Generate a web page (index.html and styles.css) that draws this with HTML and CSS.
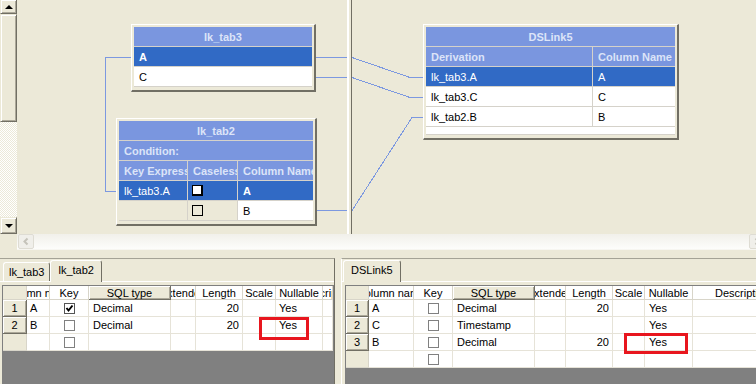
FILE: index.html
```html
<!DOCTYPE html>
<html>
<head>
  <meta charset="UTF-8">
  <meta name="viewport" content="width=device-width, initial-scale=1">
  <title>Transformer stage</title>
  <link rel="stylesheet" href="styles.css">
</head>
<body>

<div class="top">
  <div class="vscroll">
    <div class="sbtn up"><span class="tri-up"></span></div>
    <div class="thumb"></div>
    <div class="track"></div>
    <div class="sbtn down"><span class="tri-down"></span></div>
  </div>

  <div class="canvas">
    <!-- input links -->
    <div class="pane left-pane">
      <svg class="links" width="330" height="234">
        <polyline points="114,57.5 88.5,57.5 88.5,191.5 99,191.5"/>
        <polyline points="299,57.5 330,57.5"/>
        <polyline points="299,77.5 330,77.5"/>
        <polyline points="300,210.5 330,210.5"/>
      </svg>

      <div class="node n-tab3">
        <div class="ntable one">
          <div class="ncell ntitle">lk_tab3</div>
          <div class="ncell sel b">A</div>
          <div class="ncell">C</div>
        </div>
      </div>

      <div class="node n-tab2">
        <div class="ntable three">
          <div class="ncell ntitle">lk_tab2</div>
          <div class="ncell nhead wide">Condition:</div>
          <div class="ncell nhead">Key Expression</div>
          <div class="ncell nhead">Caseless</div>
          <div class="ncell nhead">Column Name</div>
          <div class="ncell sel">lk_tab3.A</div>
          <div class="ncell sel box"><span class="nbox on"></span></div>
          <div class="ncell sel b">A</div>
          <div class="ncell flat"></div>
          <div class="ncell flat box"><span class="nbox"></span></div>
          <div class="ncell">B</div>
        </div>
      </div>
    </div>

    <div class="splitter"></div>

    <!-- output link -->
    <div class="pane right-pane">
      <svg class="links" width="404" height="234">
        <polyline points="0,57.5 58,77.5 71,77.5"/>
        <polyline points="0,77.5 58,97.5 71,97.5"/>
        <polyline points="0,210.5 60,117.5 71,117.5"/>
      </svg>

      <div class="node n-link5">
        <div class="ntable two">
          <div class="ncell ntitle">DSLink5</div>
          <div class="ncell nhead">Derivation</div>
          <div class="ncell nhead">Column Name</div>
          <div class="ncell sel">lk_tab3.A</div>
          <div class="ncell sel">A</div>
          <div class="ncell">lk_tab3.C</div>
          <div class="ncell">C</div>
          <div class="ncell">lk_tab2.B</div>
          <div class="ncell">B</div>
          <div class="ncell wide"></div>
        </div>
      </div>
    </div>
  </div>
</div>

<div class="hbar">
  <div class="corner"></div>
  <div class="hscroll">
    <div class="hbtn">
      <svg width="14" height="13"><polyline points="8.5,3.5 5.5,6.5 8.5,9.5"/></svg>
    </div>
    <div class="hbtn hright">
      <svg width="14" height="13"><polyline points="5.5,3.5 8.5,6.5 5.5,9.5"/></svg>
    </div>
  </div>
</div>

<div class="dock">
  <div class="panel pleft">
    <div class="tabs">
      <div class="tab">lk_tab3</div>
      <div class="tab on">lk_tab2</div>
    </div>
    <div class="gridwrap">
      <div class="dgrid gl">
        <div class="d rh"></div>
        <div class="d h">Column name</div>
        <div class="d h">Key</div>
        <div class="d h btn">SQL type</div>
        <div class="d h">Extended</div>
        <div class="d h">Length</div>
        <div class="d h">Scale</div>
        <div class="d h">Nullable</div>
        <div class="d h">Description</div>

        <div class="d rh btn">1</div>
        <div class="d">A</div>
        <div class="d ck"><span class="cb on"><svg width="9" height="9"><polyline points="1.5,4 3.5,6.5 7.5,1.5"/></svg></span></div>
        <div class="d sq">Decimal</div>
        <div class="d"></div>
        <div class="d num">20</div>
        <div class="d"></div>
        <div class="d">Yes</div>
        <div class="d"></div>

        <div class="d rh btn">2</div>
        <div class="d">B</div>
        <div class="d ck"><span class="cb"></span></div>
        <div class="d sq">Decimal</div>
        <div class="d"></div>
        <div class="d num">20</div>
        <div class="d"></div>
        <div class="d">Yes</div>
        <div class="d"></div>

        <div class="d rh"></div>
        <div class="d"></div>
        <div class="d ck"><span class="cb"></span></div>
        <div class="d"></div>
        <div class="d"></div>
        <div class="d"></div>
        <div class="d"></div>
        <div class="d"></div>
        <div class="d"></div>
      </div>
    </div>
    <div class="mark mark-l"></div>
  </div>

  <div class="panel pright">
    <div class="tabs">
      <div class="tab on">DSLink5</div>
    </div>
    <div class="gridwrap">
      <div class="dgrid gr">
        <div class="d rh"></div>
        <div class="d h">Column name</div>
        <div class="d h">Key</div>
        <div class="d h btn">SQL type</div>
        <div class="d h">Extended</div>
        <div class="d h">Length</div>
        <div class="d h">Scale</div>
        <div class="d h">Nullable</div>
        <div class="d h">Description</div>

        <div class="d rh btn">1</div>
        <div class="d">A</div>
        <div class="d ck"><span class="cb"></span></div>
        <div class="d sq">Decimal</div>
        <div class="d"></div>
        <div class="d num">20</div>
        <div class="d"></div>
        <div class="d sq">Yes</div>
        <div class="d"></div>

        <div class="d rh btn">2</div>
        <div class="d">C</div>
        <div class="d ck"><span class="cb"></span></div>
        <div class="d sq">Timestamp</div>
        <div class="d"></div>
        <div class="d num"></div>
        <div class="d"></div>
        <div class="d sq">Yes</div>
        <div class="d"></div>

        <div class="d rh btn">3</div>
        <div class="d">B</div>
        <div class="d ck"><span class="cb"></span></div>
        <div class="d sq">Decimal</div>
        <div class="d"></div>
        <div class="d num">20</div>
        <div class="d"></div>
        <div class="d sq">Yes</div>
        <div class="d"></div>

        <div class="d rh"></div>
        <div class="d"></div>
        <div class="d ck"><span class="cb"></span></div>
        <div class="d"></div>
        <div class="d"></div>
        <div class="d"></div>
        <div class="d"></div>
        <div class="d"></div>
        <div class="d"></div>
      </div>
    </div>
    <div class="mark mark-r"></div>
  </div>
</div>

</body>
</html>
```

FILE: styles.css
```css
body{
  margin: 0;
  width: 756px;
  height: 384px;
  overflow: hidden;
  background: #ECE9D8;
  font-family: "Liberation Sans", Arial, sans-serif;
  font-size: 11px;
  color: #000;
}

/* ---- diagram area ---- */

.top{
  display: flex;
  height: 234px;
}

.vscroll{
  width: 17px;
  display: flex;
  flex-direction: column;
  background: repeating-conic-gradient(#fff 0 25%, #ECE9D8 0 50%) 0 0 / 2px 2px;
}

.sbtn, .thumb{
  box-sizing: border-box;
  background: #ECE9D8;
  border: 1px solid;
  border-color: #ECE9D8 #716F64 #716F64 #ECE9D8;
  box-shadow: inset 1px 1px #fff, inset -1px -1px #ACA899;
  display: flex;
  align-items: center;
  justify-content: center;
}

.up{
  height: 14px;
  border-top: none;
}

.thumb{
  height: 108px;
}

.track{
  flex: 1;
}

.down{
  height: 17px;
}

.tri-up, .tri-down{
  width: 0;
  height: 0;
  border-left: 4px solid transparent;
  border-right: 4px solid transparent;
}
.tri-up{ border-bottom: 4px solid #000; }
.tri-down{ border-top: 4px solid #000; }

.canvas{
  flex: 1;
  display: flex;
}

.pane{
  position: relative;
  overflow: hidden;
}

.left-pane{
  width: 330px;
}

.right-pane{
  flex: 1;
}

.splitter{
  width: 5px;
  box-sizing: border-box;
  border-left: 2px solid #fff;
  border-right: 1px solid #716F64;
}

.links{
  position: absolute;
  left: 0;
  top: 0;
}

.links polyline{
  fill: none;
  stroke: #7C98E0;
  stroke-width: 1;
  shape-rendering: crispEdges;
}

/* link boxes */

.node{
  position: absolute;
  box-sizing: border-box;
  background: #ECE9D8;
  border-style: solid;
  border-width: 1px 2px 2px 1px;
  border-color: #fff #716F64 #716F64 #fff;
  padding: 2px 2px 3px 2px;
}

.n-tab3{ left: 114px; top: 24px; width: 185px; }
.n-tab2{ left: 99px; top: 118px; width: 201px; }
.n-link5{ left: 71px; top: 24px; width: 256px; }

.ntable{
  display: grid;
  gap: 1px;
  grid-auto-rows: 19px;
  background: #D5D2CA;
  padding-bottom: 1px;
}

.one{ grid-template-columns: 1fr; }
.two{ grid-template-columns: 166px 1fr; grid-template-rows: repeat(5, 19px) 7px; }
.three{ grid-template-columns: 68px 49px 1fr; }

.ncell{
  display: flex;
  align-items: center;
  padding: 0 5px;
  white-space: nowrap;
  overflow: hidden;
  background: #fff;
}

.ntitle{
  grid-column: 1 / -1;
  justify-content: center;
  background: #7A96DF;
  color: #DCE4F8;
  font-weight: bold;
}

.nhead{
  background: #7A96DF;
  color: #DCE4F8;
  font-weight: bold;
}

.wide{
  grid-column: 1 / -1;
}

.sel{
  background: #316AC5;
  color: #fff;
}

.flat{
  background: #ECE9D8;
}

.b{
  font-weight: bold;
}

.box{
  padding: 0 4px;
}

.nbox{
  width: 9px;
  height: 9px;
  border: 1px solid #000;
}
.nbox.on{
  background: #fff;
  border-width: 1px 2px 2px 1px;
  width: 8px;
  height: 8px;
}

/* ---- horizontal scrollbar ---- */

.hbar{
  display: flex;
  height: 16px;
}

.corner{
  width: 17px;
}

.hscroll{
  flex: 1;
  display: flex;
  justify-content: space-between;
  align-items: flex-end;
  overflow: hidden;
  background: linear-gradient(#F1F0EA, #FDFDFB);
  border-bottom: 1px solid #F7F6F1;
}

.hbtn{
  width: 16px;
  height: 15px;
  margin-left: 1px;
  box-sizing: border-box;
  border: 1px solid #DEDCD3;
  border-radius: 2px;
  background: #F0EFEA;
  flex-shrink: 0;
}

.hright{
  margin-right: -9px;
}

.hbtn polyline{
  fill: none;
  stroke: #C5C3BA;
  stroke-width: 2;
}

/* ---- column grids ---- */

.dock{
  display: flex;
  gap: 6px;
  height: 134px;
  padding-top: 8px;
  box-sizing: border-box;
}

.panel{
  position: relative;
  display: flex;
  flex-direction: column;
  border-top: 1px solid #A5A396;
  overflow: hidden;
}

.pleft{
  width: 335px;
  box-sizing: border-box;
  border-right: 1px solid #716F64;
}

.pright{
  flex: 1;
  border-left: 1px solid #fff;
}

.tabs{
  height: 22px;
  display: flex;
  align-items: flex-end;
  border-bottom: 1px solid #fff;
  padding-left: 3px;
}

.pright .tabs{
  padding-left: 1px;
}

.tab{
  height: 19px;
  line-height: 18px;
  padding: 0 5px;
  box-sizing: border-box;
  border: 1px solid;
  border-color: #fff #716F64 transparent #fff;
  border-bottom: none;
  border-radius: 3px 3px 0 0;
}

.tab.on{
  position: relative;
  height: 22px;
  line-height: 19px;
  padding: 0 7px;
  margin-bottom: -1px;
  background: #ECE9D8;
}

.gridwrap{
  flex: 1;
  margin: 3px 0 0 2px;
  border-top: 1px solid #7F7F7F;
  border-left: 1px solid #7F7F7F;
  background: #808080;
  overflow: hidden;
}

.pright .gridwrap{
  margin-left: 3px;
}

.dgrid{
  display: grid;
  grid-template-rows: 14px;
  grid-auto-rows: 17px;
  width: max-content;
}

.gl{ grid-template-columns: 24px 23px 39px 82px 25px 47px 33px 47px 10px; }
.gr{ grid-template-columns: 23px 45px 39px 82px 31px 47px 32px 48px 100px; }

.d{
  display: flex;
  align-items: center;
  box-sizing: border-box;
  padding: 0 3px;
  white-space: nowrap;
  overflow: hidden;
  background: #fff;
  border-right: 1px solid #E6E3D8;
  border-bottom: 1px solid #E6E3D8;
}

.h{
  justify-content: center;
  padding: 0;
  border-color: #D8D5C9;
}

.rh{
  justify-content: center;
  padding: 0;
  background: #ECE9D8;
  border-color: #D8D5C9;
}

.btn{
  background: #ECE9D8;
  border-color: #716F64;
  box-shadow: inset 1px 1px #fff, inset -1px -1px #ACA899;
}

.sq{
  padding-left: 4px;
}

.num{
  justify-content: flex-end;
}

.ck{
  justify-content: center;
}

.cb{
  width: 11px;
  height: 11px;
  box-sizing: border-box;
  border: 1px solid #808080;
  background: #fff;
  display: flex;
  align-items: center;
  justify-content: center;
}

.cb.on{
  border-color: #555;
}

.cb polyline{
  fill: none;
  stroke: #000;
  stroke-width: 2;
}

.mark{
  position: absolute;
  box-sizing: border-box;
  border: 3px solid #E8161E;
}

.mark-l{ left: 259px; top: 58px; width: 50px; height: 23px; }
.mark-r{ left: 282px; top: 74px; width: 64px; height: 21px; }
```
